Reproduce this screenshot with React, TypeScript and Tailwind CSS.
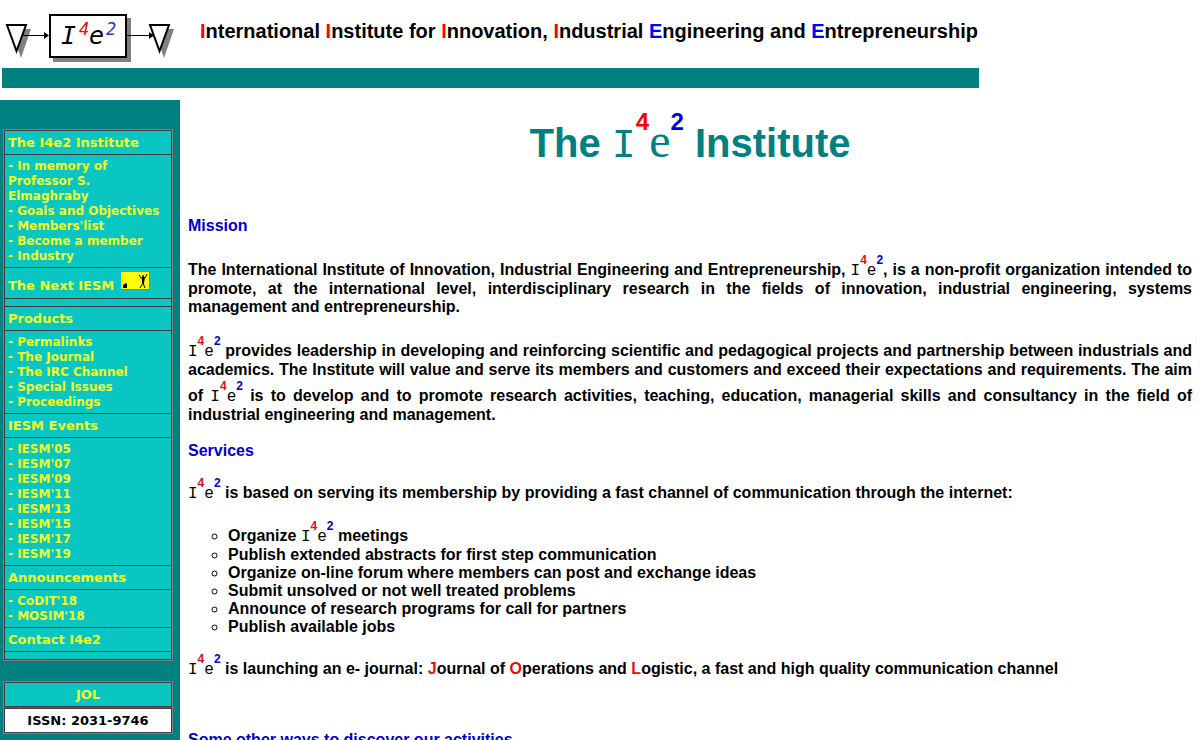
import React from "react"

type MenuGroup = {
  title: string
  links: string[]
}

const instituteLinks = [
  "In memory of Professor S. Elmaghraby",
  "Goals and Objectives",
  "Members'list",
  "Become a member",
  "Industry",
]

const menuGroups: MenuGroup[] = [
  {
    title: "Products",
    links: ["Permalinks", "The Journal", "The IRC Channel", "Special Issues", "Proceedings"],
  },
  {
    title: "IESM Events",
    links: ["IESM'05", "IESM'07", "IESM'09", "IESM'11", "IESM'13", "IESM'15", "IESM'17", "IESM'19"],
  },
  {
    title: "Announcements",
    links: ["CoDIT'18", "MOSIM'18"],
  },
]

function Brand() {
  return (
    <span className="whitespace-nowrap font-['Liberation_Mono',monospace] font-normal leading-[18px]">
      I
      <span className="font-['Liberation_Sans',sans-serif] text-[12px] leading-[14px] font-bold text-[#e01010] align-[11px]">4</span>
      e
      <span className="font-['Liberation_Sans',sans-serif] text-[12px] leading-[14px] font-bold text-[#0000cc] align-[11px]">2</span>
    </span>
  )
}

function Logo() {
  return (
    <svg className="shrink-0" width="176" height="64" viewBox="0 0 176 64" role="img" aria-label="I4e2">
      <path d="M11 29H31L21 58Z" fill="#808080" />
      <path d="M154 29H174L164 58Z" fill="#808080" />
      <rect x="53" y="18" width="78" height="44" fill="#808080" />
      <rect x="50" y="15" width="76" height="42" fill="#fff" stroke="#000" strokeWidth="2" />
      <path d="M7 25H26L16.500 51Z" fill="#fff" stroke="#000" strokeWidth="2" />
      <path d="M150 25H169L159.500 51Z" fill="#fff" stroke="#000" strokeWidth="2" />
      <path d="M23 35.500H46M127 35.500H152" stroke="#000" />
      <path d="M44 32L49 35.500L44 39ZM149 32L154 35.500L149 39Z" fill="#000" />
      <g fontFamily="DejaVu Sans Mono, monospace" fontStyle="italic">
        <text x="61" y="44" fontSize="25">I</text>
        <text x="79" y="35" fontSize="17" fill="#f00">4</text>
        <text x="89" y="44" fontSize="25">e</text>
        <text x="106" y="35" fontSize="17" fill="#3333bb">2</text>
      </g>
    </svg>
  )
}

function NextIcon() {
  return (
    <svg className="ml-[7px] inline-block align-baseline" width="29" height="18" viewBox="0 0 29 18" aria-hidden="true">
      <rect width="29" height="18" fill="#8a8a20" />
      <rect width="28" height="17" fill="#ff0" />
      <path d="M2 16V13L5 11L6 12V16Z" fill="#000" />
      <path d="M18 3L20 6L24 6L26 2M22 6V11L19 16M22 11L24 16" fill="none" stroke="#000" />
      <path d="M21 5H24L23 11H21Z" fill="#000" />
      <circle cx="22" cy="4" r="1" fill="#000" />
    </svg>
  )
}

function MenuTitle({ children }: { children: React.ReactNode }) {
  return (
    <h2 className="border-b border-[#4a3a40] px-[3px] pt-1 pb-[3px] text-[13px] leading-[16px]">
      <a href="#">{children}</a>
    </h2>
  )
}

function MenuLinks({ links }: { links: string[] }) {
  return (
    <ul className="border-b border-[#4a3a40] px-[3px] pt-1 pb-[3px] text-[12px] leading-[15px]">
      {links.map((link) => (
        <li key={link}>
          <a href="#">{`- ${link}`}</a>
        </li>
      ))}
    </ul>
  )
}

function Sidebar() {
  return (
    <aside className="w-[180px] shrink-0 bg-[#008080] pt-[29px] pr-[7px] pl-[3px] font-['DejaVu_Sans',Verdana,sans-serif] font-bold text-[#f2ff26]">
      <nav className="border border-[#808080]">
        <div className="border border-b-0 border-[#4a3a40] bg-[#0ac6c2]">
          <MenuTitle>The I4e2 Institute</MenuTitle>
          <MenuLinks links={instituteLinks} />
          <h2 className="border-b border-[#4a3a40] px-[3px] pt-1 pb-[3px] text-[13px] leading-[19px]">
            <a href="#">The Next IESM<NextIcon /></a>
          </h2>
          <div className="h-2 border-b border-[#4a3a40]" />
          {menuGroups.map((group) => (
            <div key={group.title}>
              <MenuTitle>{group.title}</MenuTitle>
              <MenuLinks links={group.links} />
            </div>
          ))}
          <MenuTitle>Contact I4e2</MenuTitle>
          <div className="h-2 border-b border-[#4a3a40]" />
        </div>
      </nav>
      <div className="mt-5 border border-[#808080] text-center text-[13px]">
        <p className="border border-[#4a3a40] bg-[#0ac6c2] pt-1 pb-[3px] leading-[16px]">
          <a href="#">JOL</a>
        </p>
        <p className="mt-px border border-[#4a3a40] bg-white pt-1 pb-[3px] leading-[16px] text-black">ISSN: 2031-9746</p>
      </div>
    </aside>
  )
}

function Heading({ children }: { children: React.ReactNode }) {
  return <h2 className="text-[#0000cc]">{children}</h2>
}

export default function App() {
  return (
    <div className="bg-white font-['Liberation_Sans',Arial,sans-serif] text-black">
      <header className="flex h-[68px] items-start">
        <Logo />
        <p className="pt-5 pl-6 text-[20px] leading-[23px] font-bold whitespace-nowrap">
          <span className="text-[#f00]">I</span>nternational <span className="text-[#f00]">I</span>nstitute for{" "}
          <span className="text-[#f00]">I</span>nnovation, <span className="text-[#f00]">I</span>ndustrial{" "}
          <span className="text-[#00f]">E</span>ngineering and <span className="text-[#00f]">E</span>ntrepreneurship
        </p>
      </header>
      <div className="mr-[221px] ml-[2px] h-5 bg-[#008080]" />

      <div className="mt-3 flex">
        <Sidebar />
        <main className="min-w-0 flex-1 px-2 text-[16px] leading-[18px] font-bold">
          <h1 className="pt-2 text-center text-[40px] leading-[46px] text-[#008080]">
            The{" "}
            <span className="whitespace-nowrap font-normal">
              <span className="font-['Liberation_Mono',monospace]">I</span>
              <span className="text-[24px] leading-[28px] font-bold text-[#f00] align-[27px]">4</span>
              <span className="font-['Liberation_Serif',serif] text-[48px]">e</span>
              <span className="text-[24px] leading-[28px] font-bold text-[#0000dd] align-[27px]">2</span>
            </span>{" "}
            Institute
          </h1>

          <div className="mt-[47px]">
            <Heading>Mission</Heading>
          </div>
          <p className="mt-[18px] text-justify">
            The International Institute of Innovation, Industrial Engineering and Entrepreneurship, <Brand />, is a
            non-profit organization intended to promote, at the international level, interdisciplinary research in the
            fields of innovation, industrial engineering, systems management and entrepreneurship.
          </p>
          <p className="mt-[18px] text-justify">
            <Brand /> provides leadership in developing and reinforcing scientific and pedagogical projects and
            partnership between industrials and academics. The Institute will value and serve its members and customers
            and exceed their expectations and requirements. The aim of <Brand /> is to develop and to promote research
            activities, teaching, education, managerial skills and consultancy in the field of industrial engineering
            and management.
          </p>
          <div className="mt-[18px]">
            <Heading>Services</Heading>
          </div>
          <p className="mt-4">
            <Brand /> is based on serving its membership by providing a fast channel of communication through the
            internet:
          </p>
          <ul className="mt-4 list-[circle] pl-10">
            <li>Organize <Brand /> meetings</li>
            <li>Publish extended abstracts for first step communication</li>
            <li>Organize on-line forum where members can post and exchange ideas</li>
            <li>Submit unsolved or not well treated problems</li>
            <li>Announce of research programs for call for partners</li>
            <li>Publish available jobs</li>
          </ul>
          <p className="mt-4">
            <Brand /> is launching an e- journal: <span className="text-[#e01010]">J</span>ournal of{" "}
            <span className="text-[#e01010]">O</span>perations and <span className="text-[#e01010]">L</span>ogistic, a
            fast and high quality communication channel
          </p>
          <div className="mt-[52px]">
            <Heading>Some other ways to discover our activities</Heading>
          </div>
        </main>
      </div>
    </div>
  )
}
